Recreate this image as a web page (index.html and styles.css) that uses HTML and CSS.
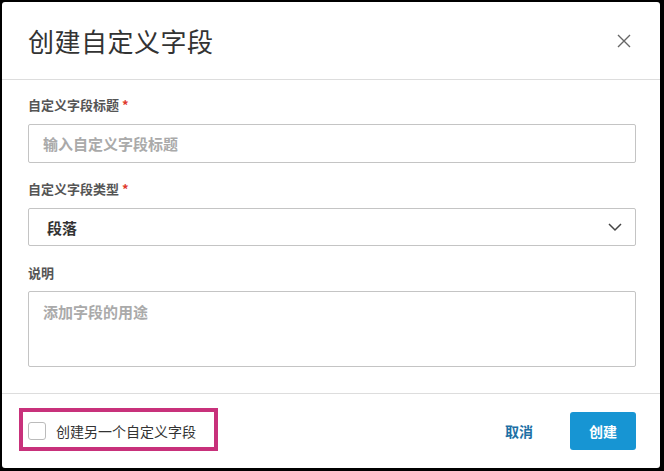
FILE: index.html
```html
<!DOCTYPE html>
<html lang="zh-CN">
<head>
    <meta charset="UTF-8">
    <meta name="viewport" content="width=device-width, initial-scale=1.0">
    <title>创建自定义字段</title>
    <link rel="stylesheet" href="styles.css">
</head>
<body>
    <div class="dialog">
        <div class="dialog-header">
            <h1 class="dialog-title">创建自定义字段</h1>
            <button class="close-btn" aria-label="关闭">
                <svg viewBox="0 0 16 16" width="16" height="16">
                    <path d="M2 2L14 14M14 2L2 14" stroke="currentColor" stroke-width="1.4" fill="none" />
                </svg>
            </button>
        </div>

        <div class="dialog-body">
            <div class="field">
                <label class="field-label">自定义字段标题 <span class="req">*</span></label>
                <div class="input">输入自定义字段标题</div>
            </div>
            <div class="field">
                <label class="field-label">自定义字段类型 <span class="req">*</span></label>
                <div class="input select">
                    <span class="select-value">段落</span>
                    <svg class="chevron" viewBox="0 0 16 16" width="16" height="16">
                        <path d="M2 5L8 11L14 5" stroke="currentColor" stroke-width="1.5" fill="none" />
                    </svg>
                </div>
            </div>
            <div class="field">
                <label class="field-label">说明</label>
                <div class="input textarea">添加字段的用途</div>
            </div>
        </div>

        <div class="dialog-footer">
            <label class="check">
                <span class="check-box"></span>
                创建另一个自定义字段
            </label>
            <div class="actions">
                <button class="btn-link">取消</button>
                <button class="btn-primary">创建</button>
            </div>
            <div class="highlight"></div>
        </div>
    </div>
</body>
</html>
```

FILE: styles.css
```css
html, body {
    height: 100%;
}
body {
    margin: 0;
    padding: 2px 4px 3px 2px;
    box-sizing: border-box;
    background-color: #000;
    font-family: "Noto Sans CJK SC", "Noto Sans", sans-serif;
    color: #333;
}
.dialog {
    height: 100%;
    background-color: #fff;
    border-radius: 3px;
    display: flex;
    flex-direction: column;
}
.dialog-header {
    height: 77px;
    border-bottom: 1px solid #ddd;
    display: flex;
    align-items: center;
    justify-content: space-between;
    padding: 0 28px 0 26px;
}
.dialog-title {
    margin: 0;
    font-size: 26px;
    font-weight: 400;
    color: #333;
    letter-spacing: 0.5px;
}
.close-btn {
    background: none;
    border: none;
    padding: 0;
    color: #666;
    display: flex;
    cursor: pointer;
}
.dialog-body {
    padding: 15px 24px 26px 26px;
    border-bottom: 1px solid #ddd;
}
.field + .field {
    margin-top: 16px;
}
.field:last-child {
    margin-top: 17px;
}
.field-label {
    display: block;
    font-size: 13px;
    font-weight: bold;
    color: #555;
    line-height: 20px;
    margin-bottom: 9px;
}
.field:last-child .field-label {
    margin-bottom: 8px;
}
.req {
    color: #e0392b;
}
.input {
    height: 39px;
    box-sizing: border-box;
    border: 1px solid #c4c4c4;
    border-radius: 2px;
    padding: 0 14px;
    display: flex;
    align-items: center;
    font-size: 15px;
    color: #aaa;
    font-weight: bold;
}
.select {
    height: 38px;
    justify-content: space-between;
    padding-left: 18px;
    color: #333;
}
.select-value {
    font-weight: bold;
    font-size: 15px;
}
.chevron {
    color: #444;
    margin-right: -2px;
}
.textarea {
    height: 76px;
    align-items: flex-start;
    padding-top: 9px;
}
.dialog-footer {
    position: relative;
    flex: 1;
    display: flex;
    align-items: center;
    justify-content: space-between;
    padding: 0 24px 0 26px;
}
.check {
    display: flex;
    align-items: center;
    gap: 10px;
    font-size: 14px;
    color: #333;
}
.check-box {
    width: 18px;
    height: 18px;
    box-sizing: border-box;
    border: 1px solid #bbb;
    border-radius: 3px;
}
.actions {
    display: flex;
    align-items: center;
    gap: 23px;
}
.btn-link {
    background: none;
    border: none;
    font-family: inherit;
    font-size: 14px;
    font-weight: bold;
    color: #1d6fa5;
    padding: 0 14px;
    cursor: pointer;
}
.btn-primary {
    width: 66px;
    height: 38px;
    background-color: #1795d3;
    border: none;
    border-radius: 3px;
    font-family: inherit;
    font-size: 14px;
    font-weight: bold;
    color: #fff;
    cursor: pointer;
}
.highlight {
    position: absolute;
    left: 17px;
    top: 14px;
    width: 199px;
    height: 43px;
    box-sizing: border-box;
    border: 4px solid #c8317b;
    pointer-events: none;
}
```
